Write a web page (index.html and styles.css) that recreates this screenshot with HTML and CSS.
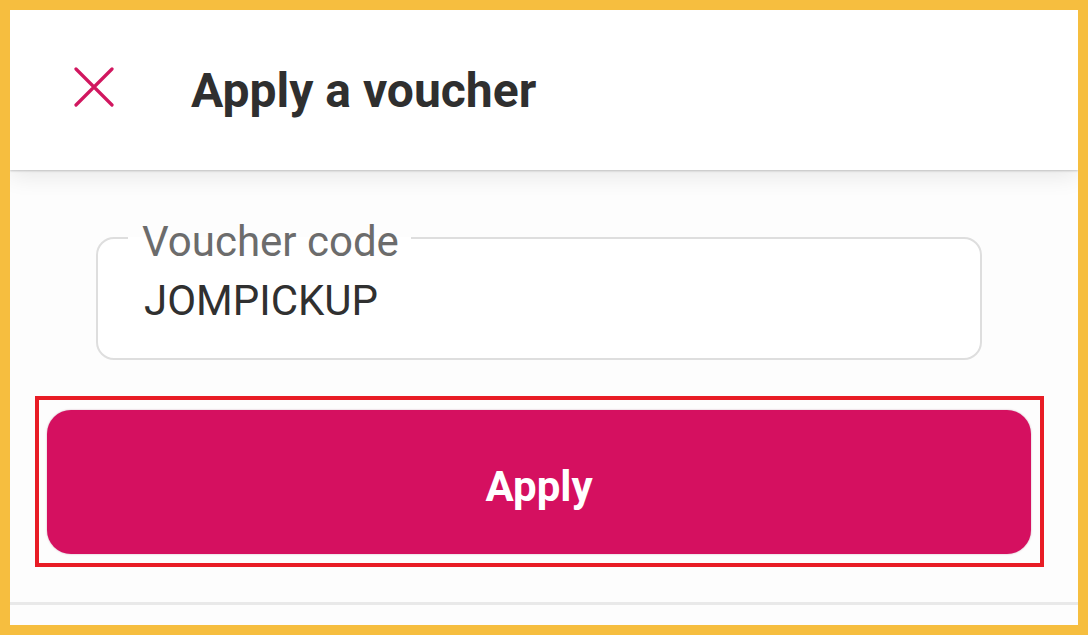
FILE: index.html
```html
<!DOCTYPE html>
<html lang="en">
<head>
<meta charset="utf-8">
<title>Apply a voucher</title>
<link rel="stylesheet" href="styles.css">
</head>
<body>
<div class="frame">
  <header class="header">
    <button class="close" aria-label="Close">
      <svg width="40" height="40" viewBox="0 0 40 40" fill="none" stroke="#d1175f" stroke-width="3.2" stroke-linecap="round">
        <path d="M2 2 L38 38 M38 2 L2 38"/>
      </svg>
    </button>
    <h1 class="title">Apply a voucher</h1>
  </header>
  <main class="content">
    <fieldset class="field">
      <legend class="field-label">Voucher code</legend>
      <div class="field-value">JOMPICKUP</div>
    </fieldset>
    <div class="highlight">
      <button class="apply">Apply</button>
    </div>
    <div class="divider"></div>
  </main>
</div>
</body>
</html>
```
FILE: styles.css
```css
html, body {
  margin: 0;
  padding: 0;
}
body {
  font-family: Roboto, "Liberation Sans", Arial, sans-serif;
  background: #f6be3f;
}
.frame {
  width: 1088px;
  height: 635px;
  box-sizing: border-box;
  border: 10px solid #f6be3f;
  background: #fdfdfd;
  display: flex;
  flex-direction: column;
  overflow: hidden;
}
.header {
  height: 160px;
  flex: none;
  background: #fff;
  display: flex;
  align-items: center;
  padding-left: 63px;
  box-sizing: border-box;
  box-shadow: 0 1px 2px rgba(0,0,0,0.2), 0 6px 22px rgba(0,0,0,0.09);
  position: relative;
  z-index: 1;
}
.close {
  width: 42px;
  height: 42px;
  padding: 1px;
  margin: -6px 0 0 0;
  border: 0;
  background: none;
  display: flex;
  align-items: center;
  justify-content: center;
}
.title {
  margin: 0 0 0 76px;
  font-size: 48px;
  font-weight: 700;
  color: #2f2f2f;
}
.content {
  flex: 1;
  display: flex;
  flex-direction: column;
  background: #fdfdfd;
}
.field {
  margin: 41px 96px 0 86px;
  padding: 0 0 0 46px;
  height: 149px;
  box-sizing: border-box;
  border: 2px solid #dedede;
  border-radius: 18px;
  background: #fff;
}
.field-label {
  margin-left: -16px;
  padding: 8px 12px 0 14px;
  font-size: 42px;
  line-height: 46px;
  color: #6c6c6c;
}
.field-value {
  font-size: 42px;
  line-height: 46px;
  color: #303030;
  margin-top: 13px;
}
.highlight {
  margin: 36px 34px 0 25px;
  border: 4px solid #e81c25;
  padding: 10px 9px 9px 8px;
}
.apply {
  display: block;
  width: 100%;
  height: 144px;
  border: 0;
  border-radius: 24px;
  background: #d51060;
  color: #fff;
  font-family: Roboto, "Liberation Sans", Arial, sans-serif;
  font-size: 42px;
  font-weight: 700;
  box-shadow: 0 0 2px rgba(120,0,60,0.35);
  padding: 8px 0 0 0;
}
.divider {
  margin-top: 35px;
  height: 3px;
  background: #e9e9e9;
}
```
